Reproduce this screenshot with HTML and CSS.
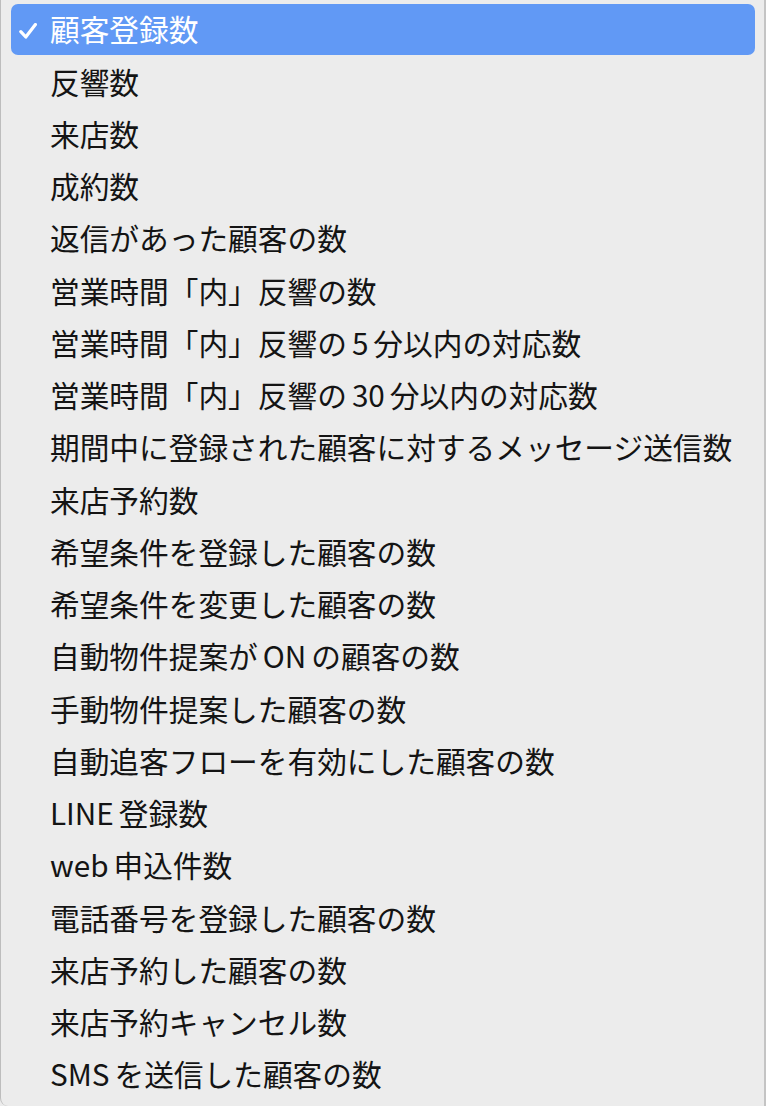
FILE: index.html
```html
<!DOCTYPE html>
<html lang="ja">
<head>
    <meta charset="UTF-8">
    <title>メニュー</title>
    <link rel="stylesheet" href="styles.css">
</head>
<body>
    <div class="menu">
        <ul class="list">
            <li class="item active">
                <span class="mark">
                    <svg width="18" height="16" viewBox="0 0 18 16"><path d="M1.8 8.6 L6.8 14 L16.4 1.6" fill="none" stroke="#fff" stroke-width="3.2" stroke-linecap="round" stroke-linejoin="round"/></svg>
                </span>
                <span class="label">顧客登録数</span>
            </li>
            <li class="item"><span class="mark"></span><span class="label">反響数</span></li>
            <li class="item"><span class="mark"></span><span class="label">来店数</span></li>
            <li class="item"><span class="mark"></span><span class="label">成約数</span></li>
            <li class="item"><span class="mark"></span><span class="label">返信があった顧客の数</span></li>
            <li class="item"><span class="mark"></span><span class="label">営業時間「内」反響の数</span></li>
            <li class="item"><span class="mark"></span><span class="label">営業時間「内」反響の<i class="sp"></i>5<i class="sp"></i>分以内の対応数</span></li>
            <li class="item"><span class="mark"></span><span class="label">営業時間「内」反響の<i class="sp"></i>30<i class="sp"></i>分以内の対応数</span></li>
            <li class="item"><span class="mark"></span><span class="label">期間中に登録された顧客に対するメッセージ送信数</span></li>
            <li class="item"><span class="mark"></span><span class="label">来店予約数</span></li>
            <li class="item"><span class="mark"></span><span class="label">希望条件を登録した顧客の数</span></li>
            <li class="item"><span class="mark"></span><span class="label">希望条件を変更した顧客の数</span></li>
            <li class="item"><span class="mark"></span><span class="label">自動物件提案が<i class="sp"></i>ON<i class="sp"></i>の顧客の数</span></li>
            <li class="item"><span class="mark"></span><span class="label">手動物件提案した顧客の数</span></li>
            <li class="item"><span class="mark"></span><span class="label">自動追客フローを有効にした顧客の数</span></li>
            <li class="item"><span class="mark"></span><span class="label">LINE<i class="sp"></i>登録数</span></li>
            <li class="item"><span class="mark"></span><span class="label">web<i class="sp"></i>申込件数</span></li>
            <li class="item"><span class="mark"></span><span class="label">電話番号を登録した顧客の数</span></li>
            <li class="item"><span class="mark"></span><span class="label">来店予約した顧客の数</span></li>
            <li class="item"><span class="mark"></span><span class="label">来店予約キャンセル数</span></li>
            <li class="item"><span class="mark"></span><span class="label">SMS<i class="sp"></i>を送信した顧客の数</span></li>
        </ul>
    </div>
</body>
</html>
```

FILE: styles.css
```css
* {
    margin: 0;
    padding: 0;
    list-style: none;
    box-sizing: border-box;
}

body {
    background: #ececec;
    font-family: "Noto Sans CJK JP", "Noto Sans", sans-serif;
}

.menu {
    width: 766px;
    height: 1106px;
    background: #ececec;
    border-left: 1px solid #bdbdbd;
    border-right: 2px solid #c4c4c4;
    border-bottom-left-radius: 8px;
    padding: 4px 9px 0 10px;
}

.list .item {
    display: flex;
    align-items: center;
    height: 52.25px;
    padding-left: 8px;
    padding-bottom: 2px;
    border-radius: 7px;
    color: #141414;
    font-size: 29.7px;
    line-height: 1;
}
.list .item.active {
    height: 51px;
    margin-bottom: 1.25px;
    background: #6199f5;
    color: #fff;
}
.list .item .mark {
    width: 18px;
    height: 16px;
    margin-right: 13px;
    margin-top: 5px;
    flex-shrink: 0;
}
.list .item .mark svg {
    display: block;
}
.list .item .label {
    white-space: nowrap;
}
.list .item .sp {
    display: inline-block;
    width: 5px;
}
```
